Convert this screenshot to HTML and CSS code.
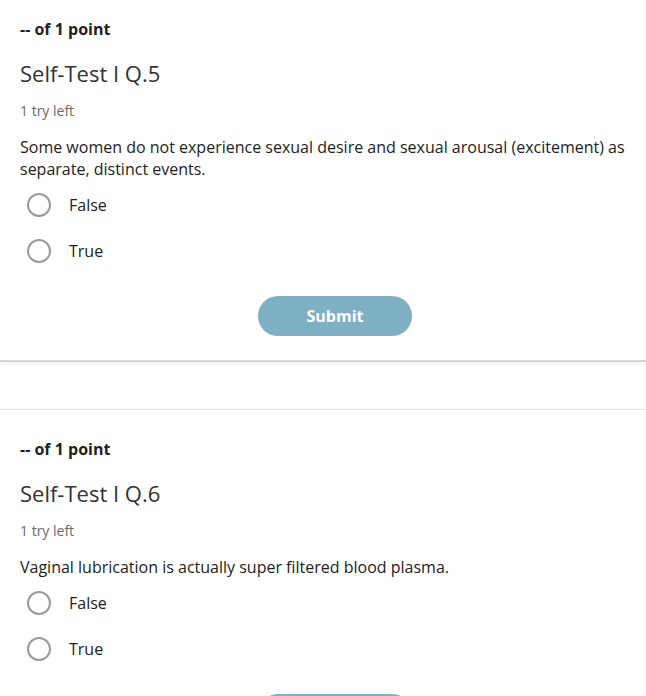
FILE: index.html
```html
<!DOCTYPE html>
<html lang="en">
<head>
<meta charset="utf-8">
<title>Self-Test</title>
<link rel="stylesheet" href="styles.css">
</head>
<body>
<div class="list">
  <section class="card first">
    <div class="points">-- of 1 point</div>
    <h2 class="title">Self-Test I Q.5</h2>
    <div class="tries">1 try left</div>
    <p class="question">Some women do not experience sexual desire and sexual arousal (excitement) as separate, distinct events.</p>
    <div class="options">
      <label class="option"><span class="radio"></span><span class="label">False</span></label>
      <label class="option"><span class="radio"></span><span class="label">True</span></label>
    </div>
    <div class="actions"><button class="submit">Submit</button></div>
  </section>
  <section class="card">
    <div class="points">-- of 1 point</div>
    <h2 class="title">Self-Test I Q.6</h2>
    <div class="tries">1 try left</div>
    <p class="question">Vaginal lubrication is actually super filtered blood plasma.</p>
    <div class="options">
      <label class="option"><span class="radio"></span><span class="label">False</span></label>
      <label class="option"><span class="radio"></span><span class="label">True</span></label>
    </div>
    <div class="actions"><button class="submit">Submit</button></div>
  </section>
</div>
</body>
</html>
```
FILE: styles.css
```css
html, body {
  margin: 0;
  padding: 0;
  background: #ffffff;
  font-family: "Open Sans", "Liberation Sans", sans-serif;
  color: #222;
  overflow: hidden;
}
.list {
  display: flex;
  flex-direction: column;
  gap: 47px;
}
.card {
  background: #fff;
  border-top: 1px solid #e4e4e4;
  border-bottom: 2px solid #d4d4d4;
  box-shadow: 0 2px 4px rgba(0, 0, 0, 0.07);
  padding: 28px 20px 24px 20px;
}
.card.first {
  margin-top: -11px;
}
.points {
  font-size: 16px;
  line-height: 22px;
  font-weight: 700;
  color: #222;
}
.title {
  margin: 18px 0 0 0;
  font-size: 22px;
  line-height: 30px;
  font-weight: 400;
  color: #333;
}
.tries {
  margin-top: 13px;
  font-size: 14px;
  line-height: 20px;
  color: #6b6b6b;
}
.question {
  margin: 15px 0 0 0;
  font-size: 16px;
  line-height: 22px;
  color: #222;
}
.options {
  margin-top: 2px;
  display: flex;
  flex-direction: column;
}
.option {
  display: flex;
  align-items: center;
  height: 46px;
}
.radio {
  box-sizing: border-box;
  width: 24px;
  height: 24px;
  border: 2px solid #9a9a9a;
  border-radius: 50%;
  margin-left: 7px;
  margin-right: 18px;
}
.label {
  font-size: 16px;
  line-height: 22px;
  color: #222;
}
.actions {
  margin-top: 22px;
  padding-left: 24px;
  display: flex;
  justify-content: center;
}
.submit {
  width: 154px;
  height: 40px;
  border: none;
  border-radius: 20px;
  background: #7fafc2;
  color: #fff;
  font-family: "Open Sans", "Liberation Sans", sans-serif;
  font-size: 16px;
  font-weight: 700;
}
```
